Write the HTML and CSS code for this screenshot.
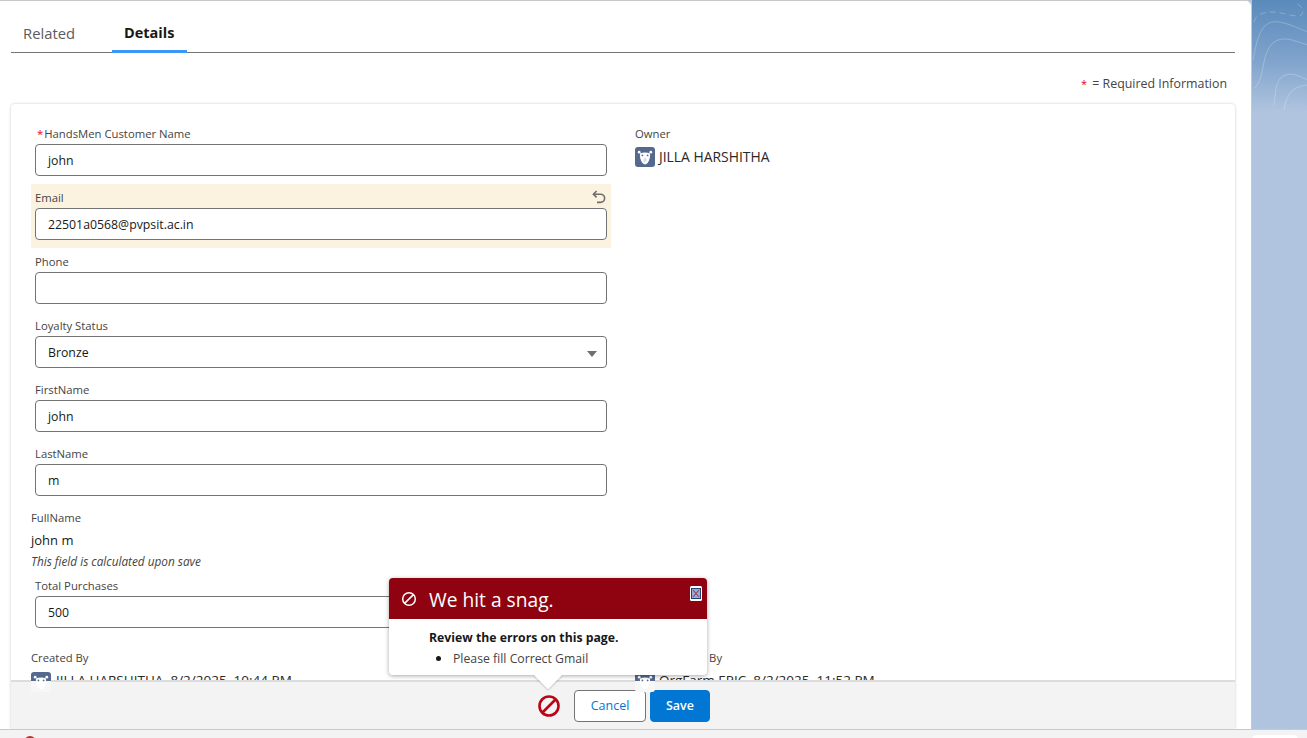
FILE: index.html
```html
<!DOCTYPE html>
<html lang="en">
<head>
<meta charset="utf-8">
<title>Customer Details</title>
<link rel="stylesheet" href="styles.css">
</head>
<body>
<div class="workspace">
  <main class="panel">
    <nav class="tabs">
      <span class="tab">Related</span>
      <span class="tab active">Details</span>
    </nav>
    <p class="required-note"><span class="req">*</span> = Required Information</p>
    <section class="card">
      <div class="columns">
        <div class="col-left">
          <div class="field">
            <label class="label"><span class="req">*</span>HandsMen Customer Name</label>
            <div class="input">john</div>
          </div>
          <div class="field changed">
            <svg class="undo" viewBox="0 0 14 14" width="14" height="14"><path d="M4.600 1 1.400 4.200l3.200 3.200M1.800 4.200h6.700a4.100 4.100 0 0 1 0 8.200H5" fill="none" stroke="#706e6b" stroke-width="1.600"/></svg>
            <label class="label">Email</label>
            <div class="input">22501a0568@pvpsit.ac.in</div>
          </div>
          <div class="field">
            <label class="label">Phone</label>
            <div class="input"></div>
          </div>
          <div class="field">
            <label class="label">Loyalty Status</label>
            <div class="input select">Bronze<span class="caret"></span></div>
          </div>
          <div class="field">
            <label class="label">FirstName</label>
            <div class="input">john</div>
          </div>
          <div class="field">
            <label class="label">LastName</label>
            <div class="input">m</div>
          </div>
          <div class="readonly">
            <span class="label">FullName</span>
            <span class="value">john m</span>
            <span class="hint">This field is calculated upon save</span>
          </div>
          <div class="field">
            <label class="label">Total Purchases</label>
            <div class="input">500</div>
          </div>
        </div>
        <div class="col-right">
          <span class="label">Owner</span>
          <div class="user owner">
            <svg class="avatar" viewBox="0 0 20 20" width="20" height="20"><rect width="20" height="20" rx="3" fill="#54698d"/><circle cx="4.200" cy="5.200" r="1.400" fill="#fff"/><circle cx="15.800" cy="5.200" r="1.400" fill="#fff"/><path d="M5 6.500c3-1.400 7-1.400 10 0 .6 4.400-1.600 10.500-5 11-3.400-.5-5.600-6.600-5-11z" fill="#fff"/><circle cx="7.400" cy="8.400" r=".9" fill="#54698d"/><circle cx="12.600" cy="8.400" r=".9" fill="#54698d"/><ellipse cx="10" cy="13" rx="1.800" ry="2.600" fill="#dfe4ec"/></svg>
            <span>JILLA HARSHITHA</span>
          </div>
        </div>
      </div>
      <div class="columns audit">
        <div class="col-left">
          <span class="label">Created By</span>
          <div class="user">
            <svg class="avatar under" viewBox="0 0 20 20" width="20" height="20"><path d="M0 9V3a3 3 0 0 1 3-3h14a3 3 0 0 1 3 3v6z" fill="#54698d"/><path d="M0 9h20v8a3 3 0 0 1-3 3H3a3 3 0 0 1-3-3z" fill="#f7f7f7"/><circle cx="4.200" cy="5.200" r="1.400" fill="#fff"/><circle cx="15.800" cy="5.200" r="1.400" fill="#fff"/><path d="M5 6.500c3-1.400 7-1.400 10 0 .6 4.400-1.600 10.500-5 11-3.400-.5-5.600-6.600-5-11z" fill="#fff"/><circle cx="7.400" cy="8.400" r=".9" fill="#54698d"/><circle cx="12.600" cy="8.400" r=".9" fill="#54698d"/></svg>
            <span>JILLA HARSHITHA, 8/2/2025, 10:44 PM</span>
          </div>
        </div>
        <div class="col-right">
          <span class="label">Last Modified By</span>
          <div class="user">
            <svg class="avatar under" viewBox="0 0 20 20" width="20" height="20"><path d="M0 9V3a3 3 0 0 1 3-3h14a3 3 0 0 1 3 3v6z" fill="#54698d"/><path d="M0 9h20v8a3 3 0 0 1-3 3H3a3 3 0 0 1-3-3z" fill="#f7f7f7"/><circle cx="4.200" cy="5.200" r="1.400" fill="#fff"/><circle cx="15.800" cy="5.200" r="1.400" fill="#fff"/><path d="M5 6.500c3-1.400 7-1.400 10 0 .6 4.400-1.600 10.500-5 11-3.400-.5-5.600-6.600-5-11z" fill="#fff"/><circle cx="7.400" cy="8.400" r=".9" fill="#54698d"/><circle cx="12.600" cy="8.400" r=".9" fill="#54698d"/></svg>
            <span>OrgFarm EPIC, 8/2/2025, 11:52 PM</span>
          </div>
        </div>
      </div>
      <footer class="footer">
        <svg class="stop" viewBox="0 0 24 24" width="24" height="24"><circle cx="12" cy="12" r="9.500" fill="none" stroke="#ba0517" stroke-width="2.600"/><path d="M5.500 18.500 18.500 5.500" stroke="#ba0517" stroke-width="2.600"/></svg>
        <button class="btn neutral">Cancel</button>
        <button class="btn brand">Save</button>
      </footer>
      <aside class="popover">
        <header class="pop-head">
          <svg viewBox="0 0 16 16" width="16" height="16"><circle cx="8" cy="8" r="6.300" fill="none" stroke="#fff" stroke-width="1.500"/><path d="M3.600 12.400 12.400 3.600" stroke="#fff" stroke-width="1.500"/></svg>
          <h2>We hit a snag.</h2>
          <svg class="close" viewBox="0 0 12 15" width="12" height="15"><rect width="12" height="15" rx="1.500" fill="#fff"/><rect x="1.500" y="2.500" width="9" height="10" fill="#8fb0da" stroke="#1f3f75"/><path d="m3 4 6 7M9 4l-6 7" stroke="#a33a4c" stroke-width="1.100"/></svg>
        </header>
        <div class="pop-body">
          <strong>Review the errors on this page.</strong>
          <ul><li>Please fill Correct Gmail</li></ul>
        </div>
      </aside>
    </section>
  </main>
  <div class="backdrop">
    <svg viewBox="0 0 55 110" width="55" height="110" fill="none" stroke="#fff" stroke-opacity=".24"><path d="M2 22C4 14 12 12 20 12s20 4 26 4 6-6 2-10-6-4-6-5" stroke-dasharray="6 4"/><path d="M1 60C5 40 8 25 20 22c10-2 25 6 36 10"/><path d="M3 88c9-10 7-28 13-38 4-10 14-13 24-10l16 5"/><path d="M22 105c2-17 2-27 12-30 8-3 16 3 22 5"/><path d="M32 110c2-14 8-24 24-25"/></svg>
  </div>
</div>
<div class="taskbar">
  <span class="task-dot"></span>
  <span class="task-tab"></span>
</div>
</body>
</html>
```
FILE: styles.css
```css
* { box-sizing: border-box; }
html, body { margin: 0; height: 738px; overflow: hidden; }
body {
  display: flex;
  flex-direction: column;
  font-family: "Open Sans", "Noto Sans", "Liberation Sans", sans-serif;
  color: #181818;
  background: #f3f3f3;
}
.workspace {
  height: 730px;
  display: flex;
  border-bottom: 1px solid #c9c9c9;
  overflow: hidden;
  background: #b0c4df;
}
.panel {
  width: 1252px;
  flex: none;
  background: #fff;
  border-top: 1px solid #c9c9c9;
  border-right: 1px solid #c9c9c9;
  border-top-right-radius: 6px;
  padding: 0 16px 0 11px;
  display: flex;
  flex-direction: column;
}
.tabs {
  height: 52px;
  flex: none;
  display: flex;
  border-bottom: 1px solid #747474;
  padding-left: 1px;
}
.tab {
  width: 75px;
  margin-right: 26px;
  padding: 22px 0 0 11px;
  font-size: 14.800px;
  line-height: 20px;
  color: #5c5c5c;
}
.tab:first-child { width: 74px; margin-right: 26px; }
.tab.active {
  color: #181818;
  font-size: 14.500px;
  font-weight: 700;
  padding-left: 12px;
  height: 52px;
  border-bottom: 3px solid #3b97f7;
}
.required-note {
  margin: 0;
  height: 51px;
  flex: none;
  padding: 22px 8px 0 0;
  text-align: right;
  font-size: 12.400px;
  line-height: 18px;
  color: #444;
}
.req { color: #ea001e; }
.required-note .req { margin-right: 2px; font-size: 11px; }
.label .req { margin: 0 1px 0 2px; }
.card {
  position: relative;
  flex: 1;
  min-height: 0;
  background: #fff;
  border-radius: 4px 4px 0 0;
  box-shadow: 0 0 3px rgba(0,0,0,.22);
  padding: 16px 0 0 20px;
}
.columns { display: grid; grid-template-columns: 604px 1fr; }
.col-left { min-width: 0; }
.col-right { display: flex; flex-direction: column; padding-top: 4px; }
.field {
  position: relative;
  width: 580px;
  height: 64px;
  padding: 4px 4px 0;
  display: flex;
  flex-direction: column;
}
.field.changed { background: #fbf2e0; }
.label {
  display: block;
  font-size: 11.300px;
  line-height: 20px;
  height: 20px;
  color: #444;
}
.input {
  height: 32px;
  border: 1px solid #747474;
  border-radius: 4px;
  background: #fff;
  padding: 0 12px;
  font-size: 12.300px;
  line-height: 32px;
  color: #181818;
  position: relative;
}
.undo { position: absolute; top: 6px; right: 5px; }
.caret {
  position: absolute;
  right: 9px;
  top: 14px;
  width: 0; height: 0;
  border-left: 5.500px solid transparent;
  border-right: 5.500px solid transparent;
  border-top: 6px solid #706e6b;
}
.readonly { width: 580px; height: 68px; padding-top: 4px; display: flex; flex-direction: column; }
.value { font-size: 13px; line-height: 20px; height: 25px; padding-top: 2px; }
.hint { font-size: 11.800px; line-height: 16px; font-style: italic; color: #444; }
.user {
  display: flex;
  align-items: center;
  gap: 4px;
  height: 20px;
  margin-top: 3px;
  font-size: 13.500px;
  color: #2b2826;
  white-space: nowrap;
}
.user span { margin-bottom: 4px; }
.owner { font-size: 13.900px; }
.owner span { margin-bottom: 2px; }
.audit { margin-top: 10px; }
.audit .col-left, .audit .col-right { padding-top: 2px; }
.audit .user { margin-top: 4px; }
.audit .col-left .user { gap: 5px; }
.avatar { flex: none; }
.under { position: relative; z-index: 2; }
.footer {
  position: absolute;
  left: 0; right: 0; bottom: 0;
  height: 49px;
  background: #f3f3f3;
  border-top: 2px solid #dcdcdc;
  display: flex;
  justify-content: center;
  align-items: center;
  gap: 4px;
  padding-left: 1px;
}
.stop { margin-right: 9px; }
.btn {
  font: inherit;
  font-size: 12.500px;
  height: 32px;
  border-radius: 4px;
  padding: 0;
}
.neutral { width: 72px; background: #fff; border: 1px solid #747474; color: #0176d3; }
.brand { width: 60px; background: #0176d3; border: 1px solid #0176d3; color: #fff; font-weight: 600; }
.popover {
  position: absolute;
  left: 378px;
  top: 474px;
  width: 318px;
  height: 97px;
  background: #fff;
  border-radius: 4px;
  box-shadow: 0 1px 4px rgba(0,0,0,.35);
  z-index: 5;
}
.popover::after {
  content: "";
  position: absolute;
  left: 149px;
  bottom: -10px;
  width: 20px;
  height: 20px;
  background: #fff;
  transform: rotate(45deg);
  box-shadow: 1px 1px 2px rgba(0,0,0,.18);
  z-index: -1;
}
.pop-head {
  height: 41px;
  background: #8e030f;
  border-radius: 4px 4px 0 0;
  display: flex;
  align-items: center;
  gap: 12px;
  padding-left: 12px;
  color: #fff;
  position: relative;
}
.pop-head h2 { margin: 2px 0 0; font-size: 19.200px; font-weight: 400; }
.close { position: absolute; right: 5px; top: 8px; }
.pop-body { padding: 9px 12px 0 40px; font-size: 12.250px; line-height: 20px; }
.pop-body strong { display: block; }
.pop-body ul { margin: -1px 0 0; padding-left: 24px; color: #444; }
.pop-body li::marker { color: #181818; font-size: 15px; }
.backdrop {
  flex: 1;
  background: linear-gradient(180deg, #5a8abb 0, #7fa3cc 60px, #b0c4df 112px);
}
.backdrop svg { display: block; }
.taskbar { height: 8px; display: flex; position: relative; }
.task-dot {
  position: absolute; left: 24px; top: 6px;
  width: 12px; height: 12px; border-radius: 50%;
  background: #a33a3a;
}
.task-tab {
  position: absolute; left: 1252px; top: 5px;
  width: 46px; height: 10px; border-radius: 5px 5px 0 0;
  background: #fff;
}
```
